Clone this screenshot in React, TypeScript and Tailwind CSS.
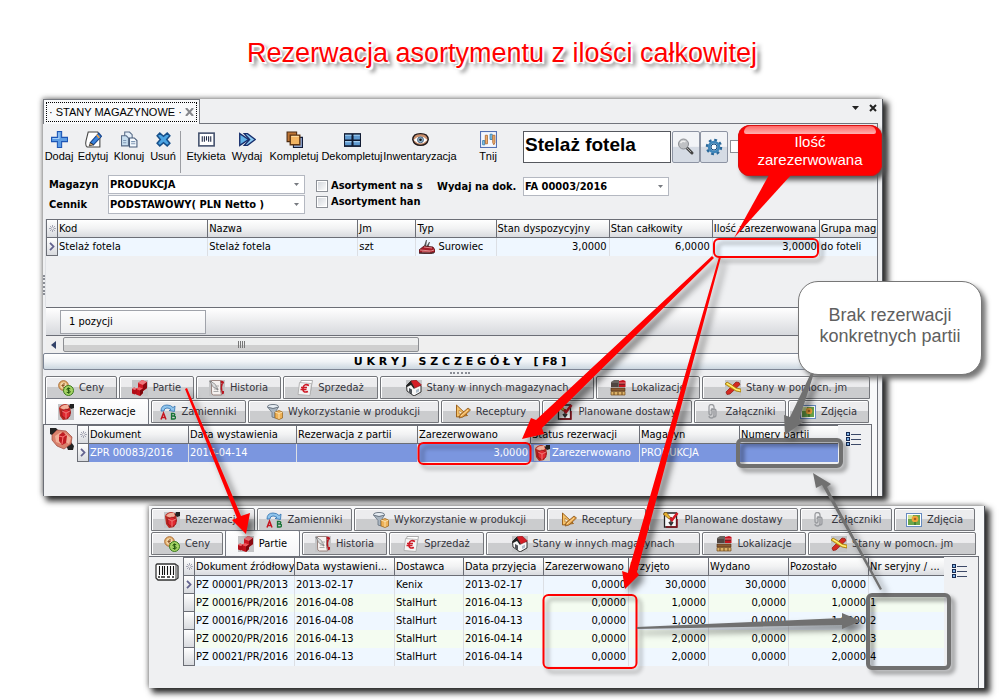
import type { ReactNode } from "react";

type IconName =
  | "coins" | "cubes" | "history" | "sale" | "house" | "location" | "sticks"
  | "reserve" | "swap" | "funnel" | "recipe" | "delivery" | "clip" | "photo";

const UI = "font-['DejaVu_Sans_Condensed','Noto_Sans',sans-serif]";
const ARIAL = "font-['Liberation_Sans',Arial,sans-serif]";

const backdrop = <rect width="16" height="16" fill="#c4c5c7" />;

const shapes: Record<IconName, ReactNode> = {
  coins: (
    <>
      <circle cx="5.5" cy="5.5" r="4.8" fill="#e8b878" stroke="#a8672c" />
      <circle cx="5.5" cy="5.5" r="3" fill="#f3d9ae" />
      <path d="M7 4Q4.500 3 4.500 5.500T7 7.500M3.500 5.500h3" fill="none" stroke="#8d5525" />
      <circle cx="10.500" cy="10.500" r="5" fill="#a6d465" stroke="#39781d" />
      <path d="M12.300 8.800q-3.400-1.600-3.400.4 0 .9 1.600 1.300 1.900.5 1.900 1.400 0 1.700-3.700.4M10.600 7.500v6.200" fill="none" stroke="#24570f" />
    </>
  ),
  cubes: (
    <>
      {backdrop}
      <path d="M6 3l4-3 5 2v6l-4 3-5-2z" fill="#d01722" />
      <path d="M6 3l4-3 5 2-4 3z" fill="#f0777c" />
      <path d="M11 5l4-3v6l-4 3z" fill="#8d0910" />
      <path d="M4 9l3-2 4 1.500V13l-3 3-4-1.500z" fill="#c11019" />
      <path d="M4 9l3-2 4 1.500L8 10.500z" fill="#f05a60" />
      <path d="M8 10.500l3-2V13l-3 3z" fill="#7d060c" />
      <path d="M0 9l2-1.500L5 8.500V13l-2 1.500-3-1z" fill="#b10d17" />
      <path d="M0 9l2-1.500L5 8.500 3 10z" fill="#ee757a" />
    </>
  ),
  history: (
    <>
      {backdrop}
      <path d="M2.500.5h9v10l1 4.500h-8Q2 15 2.500 11z" fill="#f6f1ef" stroke="#9a8580" />
      <path d="M11.500.5q4 0 3.500 3h-3zM12 3q-1 6 1 11 2 1 2-1.500V11h-1.500q-1-4 .5-7.500z" fill="#b81620" />
      <path d="M1 1l8 9" stroke="#666" strokeWidth="1.500" />
      <path d="M1 1l5 3 3 5-5-2z" fill="#ddd" stroke="#777" strokeWidth=".6" />
      <path d="M4.500 11.500h5M5 9h4M6 6h4" stroke="#aaa" />
    </>
  ),
  sale: (
    <>
      <path d="M4 .5h11.500L13 14H1.500z" fill="#fff" stroke="#999" strokeWidth=".8" />
      <path d="M2.500 2.500l12 1-1.500 12-12-1z" fill="#f4f4f4" stroke="#aaa" strokeWidth=".8" />
      <path d="M12 5.500Q7 3 6 8q-.5 5.500 5 3.500M4 7.500h6M3.500 9.500h6" fill="none" stroke="#ce1b27" strokeWidth="1.600" />
    </>
  ),
  house: (
    <>
      {backdrop}
      <path d="M.5 5.500L5 1l4 1 6 4v6l-7 4-7-5z" fill="#f7f7f7" stroke="#333" />
      <path d="M0 6L5 1l4 7-1 1L5 5 1 7z" fill="#222" />
      <path d="M5 1l5-1 5.500 5L9 8z" fill="#d51d26" stroke="#851018" strokeWidth=".6" />
      <path d="M3 8l3 1.500v5L3 12z" fill="#50545a" />
      <path d="M10 10l3-1.500v3L10 13z" fill="#aebdca" />
    </>
  ),
  location: (
    <>
      <path d="M1 2l3-2h5v7H1z" fill="#69645f" />
      <path d="M9 1l4-1 2.500 1v6H9z" fill="#c4131f" />
      <path d="M1 4h7M1 6h7M9 4h6" stroke="#3b2925" />
      <path d="M1 8h14v3H1z" fill="#8b5b32" stroke="#4a2c13" strokeWidth=".6" />
      <path d="M1 11.500h14V15H1z" fill="#dcb268" stroke="#70481c" strokeWidth=".7" />
      <path d="M4 12v3M8 12v3M12 12v3" stroke="#70481c" />
      <path d="M9 3h6" stroke="#f27b80" />
    </>
  ),
  sticks: (
    <>
      {backdrop}
      <path d="M11 2l3 .5 1 2L5 14l-3 .5L1 12z" fill="#d42a22" stroke="#8f150f" strokeWidth=".7" />
      <path d="M0 4l2-2 5 3 4 3 5 1v3l-5-1-5-3z" fill="#f3cf2d" stroke="#a2730b" strokeWidth=".8" />
      <path d="M2 3.500l5 3 4 3 4 1" fill="none" stroke="#fff396" />
    </>
  ),
  reserve: (
    <>
      {backdrop}
      <path d="M1 4Q3 0 8 0l4 2 1 7-3 6-5 1-3-4z" fill="#b92720" />
      <path d="M2 4q3-4 8-3l1 3-4 2z" fill="#f1b09a" />
      <path d="M4 7l4-2 4 2v5l-4 3-4-3z" fill="#e02830" stroke="#7c0c12" strokeWidth=".6" />
      <path d="M4 7l4 2 4-2M8 9v6" fill="none" stroke="#f79a94" strokeWidth=".7" />
      <path d="M12 0h4v4l-3 1-2-2z" fill="#222" />
    </>
  ),
  swap: (
    <>
      <path d="M1 7Q1 1 7 1q4 0 6 2.500l2-1.500-.5 5.500L9 6.500l2-1Q9.500 4 7 4 4 4 4 7z" fill="#8fc4ec" stroke="#2d70ae" strokeWidth=".8" />
      <path d="M1 15.500L3.500 9 6 15.500M2 13.500h3" fill="none" stroke="#c51620" strokeWidth="1.500" />
      <path d="M11.500 9.500v5.500h2q2 0 2-1.500T13.500 12h-2 1.500q1.800 0 1.800-1.300T13 9.500z" fill="none" stroke="#167335" strokeWidth="1.300" />
    </>
  ),
  funnel: (
    <>
      <ellipse cx="6" cy="2.500" rx="5.500" ry="2" fill="#e7edf3" stroke="#707b87" />
      <path d="M.5 3L5 8.500V13l3 1V8.500L11.500 3Q6 6 .5 3z" fill="#a9b5c1" stroke="#66717d" strokeWidth=".8" />
      <path d="M8 8l4-1.500L15.500 8v6L12 15.500 8 14z" fill="#efb155" stroke="#945f16" strokeWidth=".7" />
      <path d="M8 8l4 1.500L15.500 8M12 9.500V15" fill="none" stroke="#fae0ae" />
    </>
  ),
  recipe: (
    <>
      <path d="M1.500 1v12l11-1.500z" fill="#f5c269" stroke="#9d621d" />
      <path d="M4 6v4l4-.5z" fill="#f7efe0" stroke="#b27a31" strokeWidth=".7" />
      <path d="M4 14l1-3 8-7 2.500 2L8 13z" fill="#e6a147" stroke="#85551e" strokeWidth=".8" />
      <path d="M6 12l7-6" stroke="#ffe0a0" />
    </>
  ),
  delivery: (
    <>
      <path d="M1.500 1h12v14h-12z" fill="#f8f8f8" stroke="#252525" strokeWidth="1.300" />
      <path d="M8 5v7M6 10l2 3 2-3" fill="none" stroke="#333" strokeWidth="1.500" />
      <path d="M0 2l3-2 5 6-2 1z" fill="#e8b331" stroke="#7f5712" strokeWidth=".7" />
      <path d="M14.500 1L9 8 7 6" fill="none" stroke="#d41923" strokeWidth="2.500" />
      <path d="M14 7v8H3" fill="none" stroke="#851018" strokeWidth="1.500" />
    </>
  ),
  clip: (
    <path d="M7 4v5q0 2-1.500 2T4 9V3q0-2.500 2.500-2.500T9 3v8q0 3-2.500 3T4 12m2-5q0-2 2.500-2T11 7v4q0 2-2 2" fill="none" stroke="#999b9f" strokeWidth="1.300" />
  ),
  photo: (
    <>
      <rect x=".5" y="1.500" width="15" height="13" fill="#fff" stroke="#668ac0" />
      <path d="M2 3h12v10H2z" fill="#6aa54a" />
      <path d="M2 3h5v4H2z" fill="#cfe29a" />
      <circle cx="9" cy="7" r="3.300" fill="#f0a439" />
      <circle cx="9" cy="7" r="1.300" fill="#a85f20" />
      <path d="M9 10v3" stroke="#275a1e" />
    </>
  ),
};

function Icon({ name }: { name: IconName }) {
  return <svg viewBox="0 0 16 16" className="size-4 shrink-0" aria-hidden="true">{shapes[name]}</svg>;
}

type TabDef = { label: string; icon: IconName; width: string };

const mainTabs: TabDef[] = [
  { label: "Ceny", icon: "coins", width: "w-[72px]" },
  { label: "Partie", icon: "cubes", width: "w-[75px]" },
  { label: "Historia", icon: "history", width: "w-[85px]" },
  { label: "Sprzedaż", icon: "sale", width: "w-[95px]" },
  { label: "Stany w innych magazynach", icon: "house", width: "w-[214px]" },
  { label: "Lokalizacje", icon: "location", width: "w-[104px]" },
  { label: "Stany w pomocn. jm", icon: "sticks", width: "w-[168px]" },
];

const extraTabs: TabDef[] = [
  { label: "Rezerwacje", icon: "reserve", width: "w-[104px]" },
  { label: "Zamienniki", icon: "swap", width: "w-[95px]" },
  { label: "Wykorzystanie w produkcji", icon: "funnel", width: "w-[191px]" },
  { label: "Receptury", icon: "recipe", width: "w-[99px]" },
  { label: "Planowane dostawy", icon: "delivery", width: "w-[150px]" },
  { label: "Załączniki", icon: "clip", width: "w-[92px]" },
  { label: "Zdjęcia", icon: "photo", width: "w-[81px]" },
];

function TabRow({ tabs, active }: { tabs: TabDef[]; active?: string }) {
  return (
    <div role="tablist" className="flex h-6 items-start gap-0.5 pl-0.5">
      {tabs.map((t) => (
        <button
          key={t.label}
          type="button"
          role="tab"
          aria-selected={t.label === active}
          className={`flex shrink-0 items-center justify-center gap-[5px] rounded-t-[2px] border whitespace-nowrap ${t.width} ${
            t.label === active
              ? "-mt-0.5 h-[26px] border-b-0 border-[#747881] bg-gradient-to-b from-white to-[#f4f5f7] text-black"
              : "h-[23px] border-[#74767b] bg-gradient-to-b from-[#ececee] from-45% to-[#cbccce] to-50% text-[#34343c] shadow-[inset_1px_1px_0_#fff]"
          }`}
        >
          <Icon name={t.icon} />
          {t.label}
        </button>
      ))}
    </div>
  );
}

type Column = { title: string; width: string; numeric?: boolean };

function Marker() {
  return (
    <svg viewBox="0 0 7 7" className="mx-auto size-[7px]" aria-hidden="true">
      <path d="M3.500 0v7M0 3.500h7M1 1l5 5M6 1L1 6" stroke="#85879b" strokeWidth=".7" />
      <circle cx="3.500" cy="3.500" r="1.200" fill="#eee" />
    </svg>
  );
}

function RowArrow() {
  return (
    <svg viewBox="0 0 6 9" className="mx-auto h-[9px] w-1.5" aria-hidden="true">
      <path d="M1 .8l3.500 3.700L1 8.200" fill="none" stroke="#62628e" strokeWidth="1.800" />
    </svg>
  );
}

function Grid({ columns, rows, selected = false }: { columns: Column[]; rows: ReactNode[][]; selected?: boolean }) {
  return (
    <table className="w-full table-fixed border-separate border-spacing-0">
      <colgroup>
        <col className="w-3" />
        {columns.map((c) => <col key={c.title} className={c.width} />)}
      </colgroup>
      <thead>
        <tr className="h-[19px]">
          <th className="border border-[#6b6e76] bg-gradient-to-b from-white to-[#d9dbdf] p-0"><Marker /></th>
          {columns.map((c) => (
            <th key={c.title} className="overflow-hidden border-y border-r border-[#6b6e76] bg-gradient-to-b from-white via-[#f1f2f3] to-[#d9dbdf] p-0 pl-px text-left font-normal whitespace-nowrap last:border-r-0">
              {c.title}
            </th>
          ))}
        </tr>
      </thead>
      <tbody>
        {rows.map((row, i) => (
          <tr
            key={i}
            className={`h-[18px] ${selected ? "bg-[#7b96df] text-white" : i % 2 ? "bg-[#f4fcf1]" : "bg-[#eff7ff]"}`}
          >
            <td className="border-x border-b border-[#6b6e76] bg-gradient-to-b from-white to-[#d9dbdf] p-0">
              {i === 0 && <RowArrow />}
            </td>
            {row.map((cell, j) => (
              <td
                key={j}
                className={`overflow-hidden border-r border-[#dcdfe4] p-0 whitespace-nowrap last:border-r-0 ${
                  columns[j].numeric ? "pr-0.5 text-right" : "pl-px"
                }`}
              >
                {cell}
              </td>
            ))}
          </tr>
        ))}
      </tbody>
    </table>
  );
}

const stockColumns: Column[] = [
  { title: "Kod", width: "w-[150px]" },
  { title: "Nazwa", width: "w-[150px]" },
  { title: "Jm", width: "w-[58px]" },
  { title: "Typ", width: "w-[80px]" },
  { title: "Stan dyspozycyjny", width: "w-[113px]", numeric: true },
  { title: "Stan całkowity", width: "w-[103px]", numeric: true },
  { title: "Ilość zarezerwowana", width: "w-[107px]", numeric: true },
  { title: "Grupa mag", width: "w-[57px]" },
];

const reservationColumns: Column[] = [
  { title: "Dokument", width: "w-[100px]" },
  { title: "Data wystawienia", width: "w-[108px]" },
  { title: "Rezerwacja z partii", width: "w-[121px]" },
  { title: "Zarezerwowano", width: "w-[113px]", numeric: true },
  { title: "Status rezerwacji", width: "w-[109px]" },
  { title: "Magazyn", width: "w-[100px]" },
  { title: "Numery partii", width: "w-[98px]" },
];

const batchColumns: Column[] = [
  { title: "Dokument źródłowy", width: "w-[100px]" },
  { title: "Data wystawieni...", width: "w-[100px]" },
  { title: "Dostawca", width: "w-[69px]" },
  { title: "Data przyjęcia", width: "w-20" },
  { title: "Zarezerwowano", width: "w-[85px]", numeric: true },
  { title: "Przyjęto", width: "w-20", numeric: true },
  { title: "Wydano", width: "w-20", numeric: true },
  { title: "Pozostało", width: "w-20", numeric: true },
  { title: "Nr seryjny / ...", width: "w-[75px]" },
];

const batches = [
  ["PZ 00001/PR/2013", "2013-02-17", "Kenix", "2013-02-17", "0,0000", "30,0000", "30,0000", "0,0000", ""],
  ["PZ 00016/PR/2016", "2016-04-08", "StalHurt", "2016-04-13", "0,0000", "1,0000", "0,0000", "1,0000", "1"],
  ["PZ 00016/PR/2016", "2016-04-08", "StalHurt", "2016-04-13", "0,0000", "1,0000", "0,0000", "1,0000", "2"],
  ["PZ 00020/PR/2016", "2016-04-13", "StalHurt", "2016-04-14", "0,0000", "2,0000", "0,0000", "2,0000", "3"],
  ["PZ 00021/PR/2016", "2016-04-13", "StalHurt", "2016-04-14", "0,0000", "2,0000", "0,0000", "2,0000", "4"],
];

function Tool({ label, width, children }: { label: string; width: string; children: ReactNode }) {
  return (
    <button type="button" className={`flex shrink-0 flex-col items-center ${width}`}>
      <svg viewBox="0 0 16 16" className="size-[17px]" aria-hidden="true">{children}</svg>
      <span className={`text-[11px] leading-4 whitespace-nowrap ${ARIAL}`}>{label}</span>
    </button>
  );
}

function Toolbar() {
  return (
    <div className="flex h-12 items-start pt-[7px]">
      <Tool label="Dodaj" width="w-8">
        <path d="M6 .5h4V6h5.500v4H10v5.500H6V10H.5V6H6z" fill="#5d9de4" stroke="#1d55b5" />
        <path d="M7.500 1.500V7H1.500" fill="none" stroke="#a7d1fa" />
      </Tool>
      <Tool label="Edytuj" width="w-9">
        <path d="M3 1h9l2 4v10H2Q0 14 1 9z" fill="#fff" stroke="#444" />
        <path d="M5 11l8-9 2.500 3L8 13z" fill="#3a83dc" stroke="#15438b" />
        <path d="M4 14l1-3 3 2z" fill="#e7b77b" stroke="#222" strokeWidth=".7" />
        <path d="M11 3.500l2.500 3" stroke="#f0a244" strokeWidth="1.500" />
      </Tool>
      <Tool label="Klonuj" width="w-9">
        <path d="M3.500 1H8l2.500 2.500V11h-7z" fill="#e5f0fa" stroke="#586b87" />
        <path d="M.5 4.500H5l2 2V14H.5z" fill="#c9dff0" stroke="#586b87" />
        <path d="M8 6.500h4.500L15 9v6H8z" fill="#f6fbff" stroke="#465a78" />
        <path d="M9.500 10h4M9.500 12h4M2 9h3M2 11h3" stroke="#8098b5" />
      </Tool>
      <Tool label="Usuń" width="w-8">
        <path d="M4.500 2L8 5l3.500-3L14 4.500 11 8l3 3.500-2.500 2.500L8 11l-3.500 3L2 11.500 5 8 2 4.500z" fill="#4ba4e3" stroke="#174f89" strokeWidth="1.400" />
      </Tool>
      <span className="mr-1 ml-px h-[42px] border-l border-[#9b9da2]" />
      <Tool label="Etykieta" width="w-[42px]">
        <rect x=".8" y="2" width="14.400" height="12" fill="#fff" stroke="#45526e" strokeWidth="1.500" />
        <path d="M4 5v5M6 5v5M8 5v4M10 5v5M12 5v5" stroke="#1a2541" />
      </Tool>
      <Tool label="Wydaj" width="w-10">
        <path d="M.7 2.500L9 8l-8.300 5.500z" fill="#63b4e9" stroke="#162d6b" strokeWidth="1.300" />
        <path d="M5 2.500h3L15.300 8 8 13.500H5L10 8z" fill="#8ac8f2" stroke="#162d6b" strokeWidth="1.300" />
      </Tool>
      <Tool label="Kompletuj" width="w-[54px]">
        <path d="M1 1h9v9H1z" fill="#bd7434" stroke="#4b2a10" />
        <path d="M7 6h8.500v9.500H7z" fill="#8fa6cf" stroke="#111c39" />
        <path d="M4 4h9v9H4z" fill="#f3b562" stroke="#5e3614" strokeWidth="1.300" />
        <path d="M5 5h7" stroke="#ffe1a7" />
      </Tool>
      <Tool label="Dekompletuj" width="w-[62px]">
        <path d="M0 2h16v13H0z" fill="#101b32" />
        <path d="M1 3.500h6V8H1zM9 3.500h6V8H9zM1 9.500h6v4H1zM9 9.500h6v4H9z" fill="#5f9ad0" />
        <path d="M1 4h6M9 4h6M1 10h6M9 10h6" stroke="#a5cff0" />
      </Tool>
      <Tool label="Inwentaryzacja" width="w-[74px]">
        <path d="M.7 8Q1 2.500 8 2.500T15.300 8Q14 13.500 8 13.500T.7 8z" fill="#c98f6c" stroke="#21191a" strokeWidth="1.300" />
        <path d="M1.500 8.500Q8 2 14.500 8.500 8 15 1.500 8.500z" fill="#fff" />
        <circle cx="8" cy="8.300" r="2.800" fill="#8fb0ca" stroke="#3c5670" strokeWidth=".8" />
        <circle cx="8" cy="8.300" r="1.200" fill="#111" />
      </Tool>
      <Tool label="Tnij" width="w-[62px]">
        <rect x=".5" y=".5" width="15" height="15" fill="#f5f8ff" stroke="#5572b4" />
        <path d="M2.500 9h2v4h-2zM9.500 3h2v5h-2z" fill="#8ac5e8" stroke="#327cab" strokeWidth=".8" />
        <path d="M5 4h2v8H5zM12 4h2v7l-1 2-1-2z" fill="#f0b474" stroke="#b06930" strokeWidth=".8" />
      </Tool>
      <input
        aria-label="Szukaj asortymentu"
        defaultValue="Stelaż fotela"
        className={`ml-1 h-8 w-[148px] shrink-0 border border-[#55585e] bg-white px-px pb-1 text-[19px] font-bold ${ARIAL}`}
      />
      <div className="ml-px flex">
        <button type="button" aria-label="Szukaj" className="flex h-8 w-7 items-center justify-center rounded-[2px] border border-[#8d94a3] bg-gradient-to-b from-[#f2f4f7] from-48% to-[#d5dbe4] to-50%">
          <svg viewBox="0 0 18 18" className="size-[18px]" aria-hidden="true">
            <path d="M9 9l6 6" stroke="#444" strokeWidth="3" strokeLinecap="round" />
            <path d="M10 10l4 4" stroke="#aaa" />
            <circle cx="6.500" cy="6" r="5" fill="#bfc1c4" stroke="#8b8e93" />
            <path d="M3.500 5q2-3 5-1" fill="none" stroke="#eee" strokeWidth="1.500" />
          </svg>
        </button>
        <button type="button" aria-label="Ustawienia" className="flex h-8 w-7 items-center justify-center rounded-[2px] border border-[#8d94a3] bg-gradient-to-b from-[#f2f4f7] from-48% to-[#d5dbe4] to-50%">
          <svg viewBox="0 0 18 18" className="size-[18px]" aria-hidden="true">
            <circle cx="9" cy="9" r="7" fill="none" stroke="#2a6799" strokeWidth="2.500" strokeDasharray="2.750 2.750" />
            <circle cx="9" cy="9" r="4.800" fill="#e8f1f8" stroke="#3f86ba" strokeWidth="2.800" />
            <circle cx="9" cy="9" r="3" fill="#f8fbff" stroke="#174e81" />
          </svg>
        </button>
      </div>
      <input type="checkbox" aria-label="Filtr" className="mt-[9px] ml-0.5 size-[13px] appearance-none border border-[#8c8f96] bg-white" />
    </div>
  );
}

function Select({ id, value, width }: { id: string; value: string; width: string }) {
  return (
    <div className={`relative ${width}`}>
      <select id={id} className="block h-[19px] w-full appearance-none border border-[#b4b8c1] bg-white pl-px font-bold text-black">
        <option>{value}</option>
      </select>
      <svg viewBox="0 0 5 3" className="pointer-events-none absolute top-2 right-1.5 h-[3px] w-[5px]" aria-hidden="true">
        <path d="M0 0h5L2.500 3z" fill="#777a80" />
      </svg>
    </div>
  );
}

function CheckLine({ label }: { label: string }) {
  return (
    <label className="flex h-4 w-[111px] items-center gap-[3px] overflow-hidden font-bold whitespace-nowrap">
      <input type="checkbox" className="size-3 shrink-0 appearance-none border border-[#8c9097] bg-gradient-to-br from-[#d0d4da] to-white shadow-[inset_0_0_0_1px_white]" />
      {label}
    </label>
  );
}

function ListIcon() {
  return (
    <button type="button" aria-label="Wybór kolumn" className="h-4">
      <svg viewBox="0 0 16 15" className="h-[15px] w-4" shapeRendering="crispEdges" aria-hidden="true">
        <path d="M0 0h4v4H0zM0 5h4v4H0zM0 10h4v4H0z" fill="#172a52" />
        <path d="M1 1h2v2H1zM1 6h2v2H1zM1 11h2v2H1z" fill="#7fb2e6" />
        <path d="M5 2h10v1H5zM5 7h10v1H5zM5 12h10v1H5z" fill="#3c4968" />
      </svg>
    </button>
  );
}

function Grip({ className }: { className: string }) {
  return <div className={`border-dotted border-[#8a8d95] ${className}`} />;
}

function StockWindow() {
  return (
    <section aria-label="Stany magazynowe" className="absolute top-[99px] left-[43px] flex h-[397px] w-[840px] flex-col border-r border-[#55585e] bg-[#eff0f2] shadow-[4px_4px_6px_1px_#2c2c2c,-1px_-1px_5px_#999]">
      <header className="flex h-[25px] items-stretch">
        <div className="flex w-[157px] items-center border border-b-0 border-[#777a81] bg-[#f8f9fa] p-0.5">
          <div className={`flex h-5 w-full items-center justify-between border border-dotted border-black px-0.5 text-[11px] whitespace-nowrap ${ARIAL}`}>
            <span>· STANY MAGAZYNOWE ·</span>
            <svg viewBox="0 0 9 8" className="h-2 w-[9px] shrink-0" aria-hidden="true"><path d="M1 0l7 8M8 0L1 8" stroke="#85878c" strokeWidth="2" /></svg>
          </div>
        </div>
        <div className="mr-1 flex flex-1 items-center justify-end gap-2.5 border-b border-[#71747c] pr-px pb-1.5">
          <svg viewBox="0 0 7 4" className="h-1 w-[7px]" aria-hidden="true"><path d="M0 0h7L3.500 4z" fill="#222" /></svg>
          <svg viewBox="0 0 8 8" className="size-2" aria-hidden="true"><path d="M1 1l6 6M7 1L1 7" stroke="#222" strokeWidth="2" /></svg>
        </div>
      </header>
      <div className="mr-1 flex flex-1 flex-col border-r border-[#71747c]">
        <Toolbar />
        <div className="flex h-[47px] items-start pt-[3px] pl-1.5">
          <div className="grid w-[256px] shrink-0 grid-cols-[59px_1fr] items-center gap-y-px">
            <label htmlFor="warehouse" className="font-bold">Magazyn</label>
            <Select id="warehouse" value="PRODUKCJA" width="w-full" />
            <label htmlFor="price-list" className="font-bold">Cennik</label>
            <Select id="price-list" value="PODSTAWOWY( PLN Netto  )" width="w-full" />
          </div>
          <div className="ml-[11px] shrink-0 pt-[3px]">
            <CheckLine label="Asortyment na s" />
            <CheckLine label="Asortyment han" />
          </div>
          <div className="ml-[10px] flex shrink-0 items-center pt-0.5">
            <label htmlFor="document" className="w-[86px] font-bold whitespace-nowrap">Wydaj na dok.</label>
            <Select id="document" value="FA 00003/2016" width="w-[146px]" />
          </div>
        </div>
        <div className="flex">
          <div className="flex h-[88px] w-[3px] items-center border-r border-[#dfe1e5]">
            <Grip className="mt-11 h-5 border-l-2" />
          </div>
          <div className="flex-1">
            <Grid
              columns={stockColumns}
              rows={[[
                "Stelaż fotela", "Stelaż fotela", "szt",
                <span className="flex items-center gap-[3px] pl-0.5">
                  <svg viewBox="0 0 16 14" className="h-3.5 w-4 shrink-0" aria-hidden="true">
                    <path d="M5 6L7 0h1L7 7l3-5h1L9 8z" fill="#555" />
                    <path d="M0 10l5-4 9 1 2 3v2l-5 2-11-1z" fill="#a51c28" stroke="#4b1115" strokeWidth=".8" />
                    <path d="M1 10l11 1 3-1M5 7l8 1M3 12h8" stroke="#e18b8d" fill="none" />
                    <path d="M0 13h15" stroke="#393333" />
                  </svg>
                  Surowiec
                </span>,
                "3,0000", "6,0000", "3,0000", "do foteli",
              ]]}
            />
          </div>
        </div>
        <div className="ml-[3px] flex h-[29px] items-center border-y border-[#6b6e76] bg-gradient-to-b from-white to-[#d7d9dd]">
          <div className="ml-[14px] flex h-6 w-[146px] items-center border border-[#a0a3aa] bg-white/50 pl-2">1 pozycji</div>
        </div>
        <div className="ml-[3px] flex h-[17px] items-center bg-[#efefef]">
          <svg viewBox="0 0 5 8" className="ml-[5px] h-2 w-[5px]" aria-hidden="true"><path d="M5 0v8L0 4z" fill="#334268" /></svg>
          <div className="ml-[7px] flex h-[15px] w-[356px] items-center justify-center gap-px rounded-[2px] border border-[#8c8e92] bg-gradient-to-b from-[#eeefef] from-50% to-[#cfcfcf] to-55%">
            {[0, 1, 2, 3].map((n) => <span key={n} className="h-[7px] w-px border-r border-[#777]" />)}
          </div>
        </div>
        <button type="button" className="h-[17px] rounded-[2px] border border-[#7d8594] bg-gradient-to-b from-white via-[#f0f3f6] to-[#ccd7e0] font-['DejaVu_Sans',sans-serif] leading-[14px] font-bold whitespace-pre">
          {"U K R Y J   S Z C Z E G Ó Ł Y   [ F8 ]"}
        </button>
        <div className="flex h-1.5 items-center justify-center"><Grip className="w-5 border-t-2" /></div>
        <div className="flex flex-1 flex-col bg-[#f8f9fa]">
          <TabRow tabs={mainTabs} />
          <TabRow tabs={extraTabs} active="Rezerwacje" />
          <div className="mr-[5px] flex flex-1 items-start border-x border-t border-[#6b6e76] bg-[#eff0f2]">
            <svg viewBox="0 0 24 22" className="mt-[3px] mr-[3px] ml-1.5 h-[22px] w-6 shrink-0" aria-hidden="true">
              <path d="M0 0h6l3 3-5 5-4-2zM16 17l5-3 3 4-1 4h-5z" fill="#222" />
              <path d="M2 7l5-5 9 1 6 6-1 7-7 5-7-3-5-6z" fill="#d9816c" stroke="#9b473c" strokeWidth=".7" />
              <path d="M5 8l6-4 3 4-3 8-5-2zM15 5l6 5-2 6-5-3z" fill="#f0b09a" />
              <path d="M9 7l4-3 4 4-1 7-4 2-3-4z" fill="#bf1d23" />
              <path d="M9 8l4 1 3-2M13 9l-1 7" fill="none" stroke="#f77" />
            </svg>
            <div className="w-[761px] shrink-0">
              <Grid
                selected
                columns={reservationColumns}
                rows={[[
                  "ZPR 00083/2016", "2016-04-14", "", "3,0000",
                  <span className="flex items-center gap-0.5 pl-0.5"><Icon name="reserve" />Zarezerwowano</span>,
                  "PRODUKCJA", "",
                ]]}
              />
            </div>
            <div className="pt-1.5 pl-2"><ListIcon /></div>
          </div>
        </div>
      </div>
    </section>
  );
}

function BatchWindow() {
  return (
    <section aria-label="Partie" className="absolute top-[506px] left-[149px] flex h-[182px] w-[836px] flex-col border-r border-[#55585e] bg-[#f8f9fa] pt-0.5 shadow-[4px_4px_6px_1px_#2c2c2c,-1px_-1px_5px_#999]">
      <TabRow tabs={extraTabs} />
      <TabRow tabs={mainTabs} active="Partie" />
      <div className="mr-[5px] flex flex-1 items-start border-t border-r border-[#6b6e76] bg-[#eff0f2]">
        <svg viewBox="0 0 24 18" className="mt-1.5 mr-1 ml-1.5 h-[18px] w-6 shrink-0" aria-hidden="true">
          <path d="M2 1h18l3 2v12l-3 2H3l-2-2V2z" fill="#fff" stroke="#333" strokeWidth="1.300" />
          <path d="M4.500 3v9M7.500 3v9M9.500 3v9M12.500 3v9M15.500 3v9M18.500 3v9" stroke="#111" strokeWidth="1.100" />
          <path d="M3 14h2M6 14h4M12 14h3M17 14h2" stroke="#222" strokeWidth="1.500" />
          <path d="M21 2v14" stroke="#777" strokeWidth="1.500" />
        </svg>
        <div className="w-[761px] shrink-0"><Grid columns={batchColumns} rows={batches} /></div>
        <div className="pt-1.5 pl-2"><ListIcon /></div>
      </div>
    </section>
  );
}

function Annotations() {
  return (
    <svg viewBox="0 0 1000 700" className="pointer-events-none absolute top-0 left-0 h-[700px] w-[1000px]" aria-hidden="true">
      <g className="drop-shadow-[4px_4px_2px_rgba(0,0,0,0.4)]">
        <g fill="none" stroke="#ff0000" strokeWidth="2">
          <rect x="714" y="239" width="104" height="18" rx="5" />
          <rect x="418.500" y="443" width="112" height="21" rx="5" />
          <rect x="543.500" y="595" width="93" height="73" rx="5" />
        </g>
        <g fill="none" stroke="#707070" strokeWidth="4">
          <rect x="738" y="440" width="103" height="26" rx="4" />
          <rect x="868" y="595" width="81" height="73" rx="4" />
        </g>
      </g>
      <g fill="#ff0000" className="drop-shadow-[5px_5px_3px_rgba(0,0,0,0.5)]">
        <path d="M185 389l2-1 54 128 9-3-4 21-14-14 5-2z" />
        <path d="M712 256l2 2-172 170 2 6-22 5 9-21 5 2z" />
        <path d="M719 257h2l-84 315 2 3-14 14-3-18 6 2z" />
      </g>
      <g fill="#707070" className="drop-shadow-[5px_5px_3px_rgba(0,0,0,0.5)]">
        <path d="M811 373h3l-15 47 4 2-18 13-1-20 6 2z" />
        <path d="M882 589l-2 1-58-105-6 3-3-15 18 11-4 3z" />
        <path d="M637 627l205-9v-5l19 8-19 8v-4l-205 4z" />
      </g>
    </svg>
  );
}

export default function App() {
  return (
    <main className={`relative min-h-[700px] overflow-hidden bg-white text-[11px] leading-[14px] text-black ${UI}`}>
      <h1 className={`pt-[37px] pl-1 text-center text-[27px] leading-8 text-[#ff0000] [text-shadow:1px_1px_0_#fff,-1px_-1px_0_#fff,2px_2px_1px_#fff,-2px_1px_1px_#fff,4px_4px_4px_#555] ${ARIAL}`}>
        Rezerwacja asortymentu z ilości całkowitej
      </h1>
      <StockWindow />
      <BatchWindow />
      <Annotations />
      <aside className={`absolute top-[125px] left-[738px] h-[51px] w-36 rounded-xl bg-[#ff0000] pt-2 text-center text-[15px] leading-[18px] text-white shadow-[4px_4px_5px_#555,inset_0_0_0_1px_#d81111] ${ARIAL}`}>
        <span className="absolute inset-x-1.5 top-px h-2 rounded-t-lg rounded-b-[3px] bg-gradient-to-b from-[#ff6666] to-[#ffb0b0]" />
        <svg viewBox="0 0 60 64" className="absolute top-[50px] -left-1 h-16 w-[60px]" aria-hidden="true">
          <path d="M35 0h22L0 63z" fill="#ff0000" />
        </svg>
        <span className="relative">Ilość<br />zarezerwowana</span>
      </aside>
      <aside className={`absolute top-[281px] left-[798px] flex h-[94px] w-[184px] items-center justify-center rounded-[20px] border border-[#777777] bg-white pb-1 text-center text-[18px] leading-[21px] text-[#606060] shadow-[4px_4px_5px_#777] ${ARIAL}`}>
        Brak rezerwacji<br />konkretnych partii
      </aside>
    </main>
  );
}
